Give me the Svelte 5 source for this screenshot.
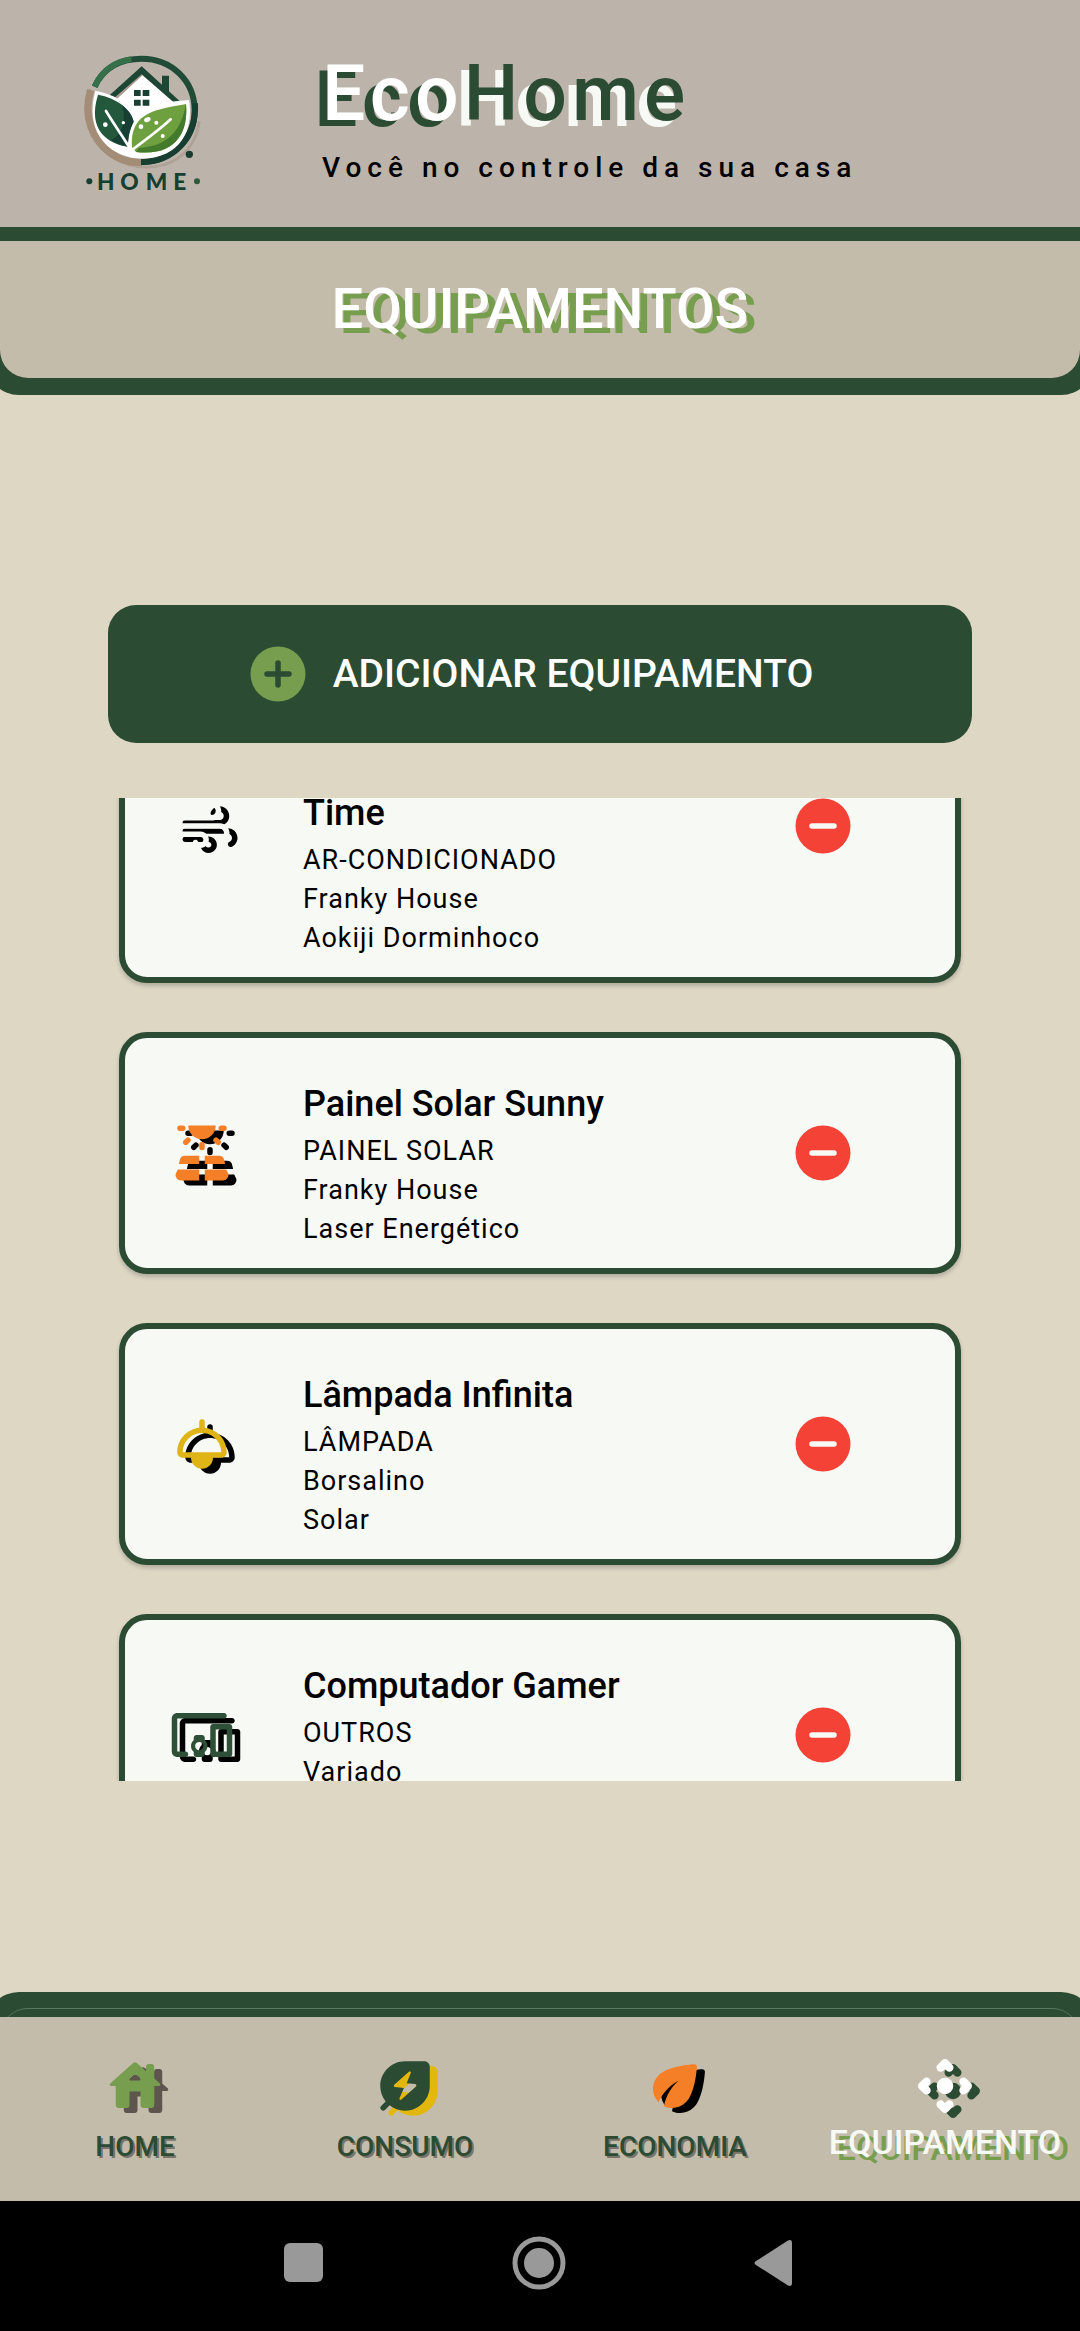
<script>
  import { onMount } from 'svelte';

  const devices = [
    { name: 'Time', lines: ['AR-CONDICIONADO', 'Franky House', 'Aokiji Dorminhoco'], icon: 'air', tall: true },
    { name: 'Painel Solar Sunny', lines: ['PAINEL SOLAR', 'Franky House', 'Laser Energético'], icon: 'solar' },
    { name: 'Lâmpada Infinita', lines: ['LÂMPADA', 'Borsalino', 'Solar'], icon: 'lamp' },
    { name: 'Computador Gamer', lines: ['OUTROS', 'Variado'], icon: 'other' }
  ];

  const tabs = [
    { label: 'HOME', icon: 'house' },
    { label: 'CONSUMO', icon: 'energy' },
    { label: 'ECONOMIA', icon: 'eco' },
    { label: 'EQUIPAMENTO', icon: 'hub', active: true }
  ];

  let list;
  onMount(() => {
    list.scrollTop = 129;
  });
</script>

{#snippet icon(name)}
  <svg class="icon {name}" viewBox="0 0 24 24" aria-hidden="true">
    {#if name === 'air'}
      <path d="M14.5 17c0 1.65-1.35 3-3 3-1.2 0-2.25-.7-2.72-1.73-.3-.63.17-1.27.87-1.27.4 0 .72.25.9.6.17.24.54.4.95.4.55 0 1-.45 1-1s-.45-1-1-1H3c-.55 0-1-.45-1-1s.45-1 1-1h8.500c1.650 0 3 1.350 3 3zM19 6.500C19 4.570 17.430 3 15.500 3c-1.430 0-2.660.860-3.200 2.090-.29.660.2 1.410.920 1.410.390 0 .760-.22.910-.58.230-.54.760-.92 1.370-.92.830 0 1.500.670 1.500 1.500S16.330 8 15.500 8H3c-.55 0-1 .45-1 1s.45 1 1 1h12.500c1.930 0 3.500-1.570 3.500-3.500zM18.500 11H3c-.55 0-1 .45-1 1s.45 1 1 1h15.500c.830 0 1.500.670 1.500 1.500 0 .610-.380 1.140-.920 1.370-.36.150-.58.520-.58.910 0 .720.740 1.210 1.410.920C21.130 17.160 22 15.930 22 14.500c0-1.930-1.570-3.500-3.500-3.500z" />
    {:else if name === 'solar'}
      <path d="M7 2h10a5 5 0 0 1-10 0zM4 2h1a1 1 0 0 1 0 2H4a1 1 0 0 1 0-2zM19 2h1a1 1 0 0 1 0 2h-1a1 1 0 0 1 0-2zM12 8a1 1 0 0 1 1 1v1a1 1 0 0 1-2 0V9a1 1 0 0 1 1-1z" />
      <path d="M11 13H5.900a2 2 0 0 0-2 1.600L3.600 16H11zM13 13h5.100a2 2 0 0 1 2 1.600l.3 1.400H13zM3.200 18H11v4H4.400a2 2 0 0 1-2-2.400zM20.800 18H13v4h6.600a2 2 0 0 0 2-2.400z" />
      <path class="line" d="M6.100 8.100l.8-.8M17.900 8.100l-.8-.8" />
    {:else if name === 'lamp'}
      <path fill-rule="evenodd" d="M13 6.060V4a1 1 0 0 0-2 0v2.060c-4.500.500-8 4.310-8 8.930C3 16.100 3.900 17 5.010 17H8c0 2.210 1.790 4 4 4s4-1.790 4-4h2.990C20.100 17 21 16.100 21 14.990c0-4.620-3.500-8.430-8-8.930zM5 15c0-3.860 3.140-7 7-7s7 3.140 7 7z" />
    {:else if name === 'other'}
      <path fill-rule="evenodd" d="M3 6h17c.55 0 1-.45 1-1s-.45-1-1-1H3c-1.100 0-2 .9-2 2v12c0 1.100.9 2 2 2h3c.55 0 1-.45 1-1s-.45-1-1-1H3zM12 12h-2c-.55 0-1 .45-1 1v.78c-.61.55-1 1.330-1 2.220s.39 1.670 1 2.220V19c0 .55.45 1 1 1h2c.55 0 1-.45 1-1v-.78c.61-.55 1-1.340 1-2.220s-.39-1.670-1-2.220V13c0-.55-.45-1-1-1zm-1 5.500a1.500 1.500 0 1 1 0-3 1.500 1.500 0 0 1 0 3zM22 8h-6c-.5 0-1 .5-1 1v10c0 .5.5 1 1 1h6c.5 0 1-.5 1-1V9c0-.5-.5-1-1-1zm-1 10h-4v-8h4z" />
    {:else if name === 'house'}
      <path fill-rule="evenodd" d="M19 9.300V5c0-.55-.45-1-1-1h-1c-.55 0-1 .45-1 1v1.600l-3.330-3c-.38-.34-.96-.34-1.340 0l-8.360 7.530c-.34.300-.13.870.330.870H5v7c0 .55.45 1 1 1h3c.55 0 1-.45 1-1v-5h4v5c0 .55.45 1 1 1h3c.55 0 1-.45 1-1v-7h1.700c.46 0 .68-.57.330-.87zM10 10c0-1.100.9-2 2-2s2 .9 2 2z" />
    {:else if name === 'energy'}
      <path fill-rule="evenodd" d="M12 3c-4.970 0-9 4.030-9 9 0 2.120.740 4.070 1.970 5.610L3.300 19.290a1 1 0 0 0 1.410 1.410l1.680-1.680C7.930 20.260 9.880 21 12 21c4.970 0 9-4.030 9-9V5c0-1.100-.9-2-2-2zM14.100 7.300l-1.500 3.700 3.100.3c.4.050.6.550.3.850l-5.300 4.800c-.4.300-.9-.1-.7-.5l1.600-3.750-3.200-.3c-.4-.05-.6-.55-.3-.85l5.300-4.750c.4-.3.900.1.700.5z" />
    {:else if name === 'eco'}
      <path d="M6.050 8.050c-2.730 2.730-2.730 7.150-.02 9.880 1.470-3.400 4.090-6.240 7.360-7.930-2.770 2.340-4.710 5.610-5.390 9.320 2.600 1.230 5.800.780 7.950-1.370 3-3 3.850-10.200 4.020-12.900.04-.6-.4-1.050-1-1C16.200 4.200 9.050 5.050 6.050 8.050z" />
    {:else if name === 'hub'}
      <circle cx="12" cy="12" r="3" />
      <path class="thick" d="M10.400 5.300L12 3.700l1.600 1.600M10.400 18.700l1.600 1.600 1.600-1.600M5.300 10.400L3.700 12l1.600 1.600M18.700 10.400l1.600 1.600-1.600 1.600" />
    {:else if name === 'add'}
      <circle cx="12" cy="12" r="10" />
      <path class="sign" d="M12 8v8M8 12h8" />
    {:else if name === 'remove'}
      <circle cx="12" cy="12" r="10" />
      <path class="sign" d="M8 12h8" />
    {/if}
  </svg>
{/snippet}

<div class="app">
  <header class="brand">
    <svg class="logo" viewBox="0 0 540 540" role="img" aria-label="EcoHome">
      <path d="M92 178C62 256 92 340 162 384C222 420 300 420 352 386C392 358 412 320 418 274" fill="none" stroke="#aea196" stroke-width="8" />
      <path d="M92 180C68 260 98 330 150 368C180 390 212 400 246 396" fill="none" stroke="#a38d76" stroke-width="22" />
      <path d="M104 170C130 112 184 86 245 86C334 86 404 152 404 242C404 328 334 396 243 396" fill="none" stroke="#204b37" stroke-width="18" />
      <path d="M104 170C126 120 168 94 214 88" fill="none" stroke="#35704a" stroke-width="18" />
      <path d="M405 220C410 326 338 396 243 396" fill="none" stroke="#183d31" stroke-width="18" />
      <path d="M245 134L168 208L178 300H330L350 222Z" fill="#fff" />
      <path d="M168 206L246 134" fill="none" stroke="#a9988a" stroke-width="5" />
      <path d="M146 198L245 109L306 164V137H327V184L362 216H340L245 133L163 204Z" fill="#1d4635" />
      <path d="M222 180h20v18h-20zM248 180h20v18h-20zM222 209h20v18h-20zM248 209h20v18h-20z" fill="#1b4033" />
      <path d="M106 182C160 192 204 216 220 258C252 226 312 216 387 210C402 300 362 384 246 386C160 384 70 318 106 182Z" fill="#fff" />
      <path d="M114 194C170 204 208 234 221 274C207 302 204 326 204 350C146 342 80 302 114 194Z" fill="#23583d" />
      <path d="M186 226C206 240 218 258 221 276C207 302 204 326 204 350C184 348 166 340 154 330C186 316 200 270 186 226Z" fill="#173f33" />
      <path d="M138 243C160 280 186 316 208 352" fill="none" stroke="#fff" stroke-width="8" stroke-linecap="round" />
      <path d="M378 222C386 310 344 380 228 366L216 352C208 240 300 238 378 222Z" fill="#6fa03f" />
      <path d="M378 222C386 310 344 380 228 366L236 354C326 348 364 300 378 222Z" fill="#437a2c" />
      <path d="M216 360C262 326 300 298 332 268" fill="none" stroke="#fff" stroke-width="8" stroke-linecap="round" />
      <g fill="#fff">
        <circle cx="136" cy="284" r="7" />
        <circle cx="190" cy="278" r="5" />
        <circle cx="243" cy="290" r="7" />
        <ellipse cx="262" cy="269" rx="10" ry="7" transform="rotate(-25 262 269)" />
        <circle cx="289" cy="278" r="6" />
        <circle cx="308" cy="318" r="6" />
      </g>
      <circle cx="388" cy="373" r="11" fill="#183d31" />
      <circle cx="88" cy="454" r="9" fill="#183d31" />
      <circle cx="411" cy="454" r="9" fill="#2b5a3a" />
      <text class="logo-text" x="111 181 257 340" y="480">HOME</text>
    </svg>
    <div class="brand-text">
      <h1><span class="eco-word">Eco</span><span class="home-word">Home</span></h1>
      <p>Você no controle da sua casa</p>
    </div>
  </header>

  <div class="banner">
    <div class="banner-inner"><h2>EQUIPAMENTOS</h2></div>
  </div>

  <main>
    <button class="add-button" type="button">
      {@render icon('add')}
      <span>ADICIONAR EQUIPAMENTO</span>
    </button>

    <ul class="list" bind:this={list}>
      {#each devices as d}
        <li class="card" class:tall={d.tall}>
          <div class="lead">{@render icon(d.icon)}</div>
          <div class="info">
            <h3>{d.name}</h3>
            {#each d.lines as line}
              <p>{line}</p>
            {/each}
          </div>
          <button class="remove-button" type="button" aria-label="Remover {d.name}">
            {@render icon('remove')}
          </button>
        </li>
      {/each}
    </ul>
  </main>

  <div class="nav-edge"><div class="nav-rim"></div></div>
  <nav>
    {#each tabs as t}
      <a href="#{t.icon}" class:active={t.active} aria-current={t.active ? 'page' : undefined}>
        {@render icon(t.icon)}
        <span class="label">{t.label}</span>
      </a>
    {/each}
  </nav>

  <footer class="system">
    <button type="button" aria-label="Recentes">
      <svg viewBox="0 0 56 56"><rect x="8" y="8" width="39" height="39" rx="6" /></svg>
    </button>
    <button type="button" aria-label="Início">
      <svg viewBox="0 0 56 56"><circle cx="27" cy="28" r="15" /><circle class="ring" cx="27" cy="28" r="24" /></svg>
    </button>
    <button type="button" aria-label="Voltar">
      <svg viewBox="0 0 56 56"><path d="M8 26L40 5.500Q44 4 44 8V48Q44 52 40 50.500L8 30Q5 28 8 26Z" /></svg>
    </button>
  </footer>
</div>

<style>
  :global(body) {
    margin: 0;
    background: #ded7c4;
  }

  .app {
    --green: #2b4b33;
    --leaf: #779e4e;
    --sand: #c4bcab;
    --paper: #f7f9f5;
    display: flex;
    flex-direction: column;
    height: 100vh;
    overflow: hidden;
    background: #ded7c4;
    color: #000;
    font-family: Roboto, 'Liberation Sans', sans-serif;
  }

  h1, h2, h3, p, ul {
    margin: 0;
    padding: 0;
  }

  button {
    border: 0;
    padding: 0;
    background: none;
    font: inherit;
    color: inherit;
    cursor: pointer;
  }

  .icon {
    display: block;
    flex: none;
    width: 66px;
    height: 66px;
    overflow: visible;
    fill: currentColor;
  }

  .line, .thick, .sign {
    fill: none;
    stroke: currentColor;
    stroke-width: 2;
    stroke-linecap: round;
    stroke-linejoin: round;
  }

  .thick {
    stroke-width: 3;
  }

  .brand {
    display: flex;
    gap: 82px;
    padding: 30px 60px 17px;
    background: #bcb3aa;
  }

  .logo {
    flex: none;
    width: 180px;
    height: 180px;
  }

  .logo-text {
    fill: #183d31;
    font-family: Lato, sans-serif;
    font-weight: 900;
    font-size: 68px;
  }

  .brand-text {
    padding-top: 18px;
  }

  h1 {
    font-size: 77px;
    font-weight: 500;
    line-height: 92px;
    letter-spacing: 5px;
    color: var(--green);
  }

  .eco-word {
    color: #fff;
    text-shadow: -8px 6px 0 var(--green);
  }

  .home-word {
    text-shadow: -8px 6px 0 var(--paper);
  }

  .brand p {
    font-size: 28px;
    font-weight: 500;
    line-height: 56px;
    letter-spacing: 6px;
  }

  .banner {
    margin: 0 -14px;
    padding: 14px 14px 17px;
    border-radius: 0 0 33px 33px;
    background: var(--green);
  }

  .banner-inner {
    padding: 35px 0 36px;
    border-radius: 0 0 28px 28px;
    background: var(--sand);
    text-align: center;
  }

  h2 {
    font-size: 56px;
    font-weight: 500;
    line-height: 66px;
    color: #fff;
    text-shadow: 8px 5px 0 var(--leaf);
  }

  main {
    display: flex;
    flex: 1;
    flex-direction: column;
    gap: 55px;
    width: 80%;
    min-height: 0;
    margin: 0 auto;
    padding: 210px 0 211px;
  }

  .add-button {
    display: flex;
    flex: none;
    align-items: center;
    justify-content: center;
    gap: 22px;
    padding: 36px 58px 36px 36px;
    border-radius: 28px;
    background: var(--green);
    color: #fff;
    font-size: 39px;
    font-weight: 500;
  }

  .add {
    color: var(--leaf);
  }

  .add .sign {
    stroke: var(--green);
  }

  .list {
    display: flex;
    flex: 1;
    flex-direction: column;
    gap: 49px;
    min-height: 0;
    padding: 0 11px;
    overflow-y: auto;
    scrollbar-width: none;
    list-style: none;
  }

  .card {
    display: flex;
    flex: none;
    align-items: center;
    box-sizing: border-box;
    height: 242px;
    padding: 0 99px 0 44px;
    border: 6px solid var(--green);
    border-radius: 28px;
    background: var(--paper);
    box-shadow: 0 3px 4px rgba(0, 0, 0, 0.2);
  }

  .card.tall {
    height: 314px;
  }

  .lead {
    flex: none;
    width: 134px;
  }

  .info {
    flex: 1;
    align-self: flex-end;
    height: 186px;
  }

  .info h3 {
    margin-bottom: 6px;
    font-size: 36px;
    font-weight: 500;
    line-height: 44px;
  }

  .info p {
    font-size: 27px;
    line-height: 39px;
    letter-spacing: 1px;
  }

  .remove-button {
    color: #f44336;
  }

  .remove .sign {
    stroke: var(--paper);
  }

  .air {
    color: var(--paper);
    filter: drop-shadow(8px 5px 0 #000);
  }

  .solar {
    color: #f57f27;
    filter: drop-shadow(8px 5px 0 #000);
  }

  .lamp {
    color: #dfb414;
    filter: drop-shadow(8px 5px 0 #000);
  }

  .other {
    color: #2f5038;
    filter: drop-shadow(8px 5px 0 #000);
  }

  .house {
    color: #779e4e;
    filter: drop-shadow(8px 5px 0 #5e564e);
  }

  .energy {
    color: var(--green);
    filter: drop-shadow(8px 5px 0 #e3b70b);
  }

  .eco {
    color: #f57f27;
    filter: drop-shadow(8px 5px 0 #000);
  }

  .hub {
    color: #fff;
    filter: drop-shadow(8px 5px 0 #2b4b33);
  }

  .nav-edge {
    flex: none;
    margin: 0 -14px -27px;
    padding-top: 16px;
    border-radius: 33px 33px 0 0;
    background: var(--green);
  }

  .nav-rim {
    height: 35px;
    margin: 0 14px;
    border-top: 1px solid #5a7860;
    border-radius: 28px 28px 0 0;
  }

  nav {
    position: relative;
    display: grid;
    flex: none;
    grid-template-columns: repeat(4, 1fr);
    background: var(--sand);
  }

  nav a {
    display: flex;
    flex-direction: column;
    align-items: center;
    padding: 36px 0 39px;
    color: var(--green);
    font-size: 28px;
    font-weight: 500;
    line-height: 30px;
    text-decoration: none;
  }

  .label {
    display: flex;
    align-items: flex-end;
    height: 43px;
    text-shadow: 2px 2px 0 rgba(0, 0, 0, 0.4);
  }

  .active .label {
    color: var(--paper);
    font-size: 34px;
    line-height: 39px;
    text-shadow: 8px 6px 0 var(--leaf);
  }

  .system {
    display: flex;
    flex: none;
    justify-content: center;
    gap: 180px;
    padding: 34px 0 40px;
    background: #000;
  }

  .system svg {
    display: block;
    width: 56px;
    height: 56px;
    fill: #999;
  }

  .system .ring {
    fill: none;
    stroke: #999;
    stroke-width: 5;
  }
</style>
